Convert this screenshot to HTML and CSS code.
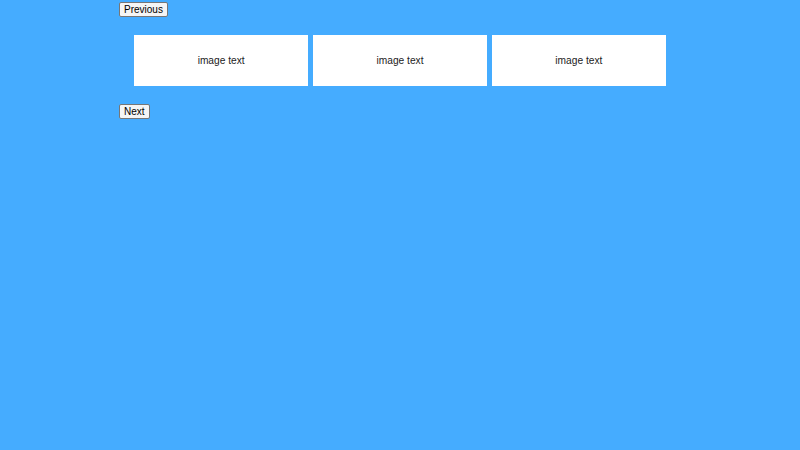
FILE: index.html
```html
<!DOCTYPE html>
<html>
<head>
<meta charset="utf-8">
<link rel="stylesheet" href="styles.css">
</head>
<body>
<div class="wrap">
  <button class="btn">Previous</button>
  <div class="track">
    <div class="card">image text</div>
    <div class="card">image text</div>
    <div class="card">image text</div>
  </div>
  <button class="btn">Next</button>
</div>
</body>
</html>
```
FILE: styles.css
```css
html, body {
  margin: 0;
  padding: 0;
  background: #45acff;
  height: 100%;
}
.wrap {
  width: 562px;
  margin: 0 auto;
  padding-top: 2px;
  font-family: "Liberation Sans", Arial, sans-serif;
}
.btn {
  display: block;
  font-family: "Liberation Sans", Arial, sans-serif;
  font-size: 10px;
  line-height: 11px;
  padding: 1px 4px;
  margin: 0;
  background: #f5f5f5;
  color: #000;
  border: 1px solid #767676;
  border-radius: 2px;
}
.track {
  display: flex;
  gap: 4.6px;
  padding: 18px 15px;
}
.card {
  width: 174.6px;
  height: 51px;
  background: #fff;
  display: flex;
  align-items: center;
  justify-content: center;
  font-size: 10.2px;
  color: #222;
}
```
